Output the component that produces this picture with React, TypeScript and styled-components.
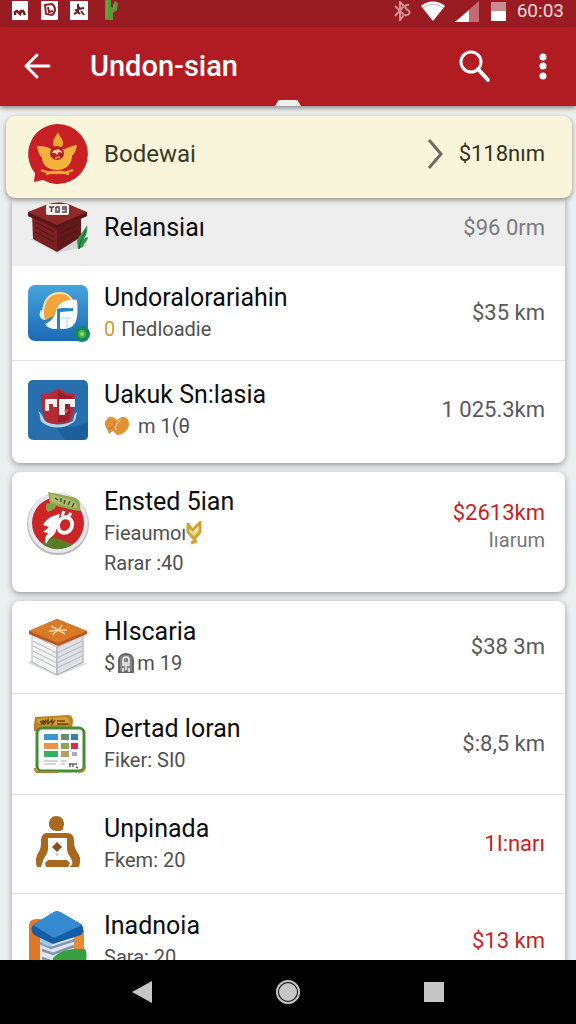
import React from "react";
import styled, { createGlobalStyle } from "styled-components";

const GlobalStyle = createGlobalStyle`
  *, *::before, *::after { box-sizing: border-box; }
  body { margin: 0; background: #000; font-family: Roboto, "Noto Sans", sans-serif; }
  h1, h2, p, ul { margin: 0; padding: 0; font-weight: 400; }
  ul { list-style: none; }
  svg { display: block; flex: none; }
`;

const Screen = styled.div`
  display: flex;
  flex-direction: column;
  height: 100vh;
  overflow: hidden;
  background: #eceff0;
`;

const StatusBar = styled.div`
  display: flex;
  flex: none;
  justify-content: space-between;
  align-items: flex-start;
  height: 27px;
  padding: 0 12px;
  background: #981c22;
`;

const StatusGroup = styled.div<{ $gap: number }>`
  display: flex;
  align-items: center;
  gap: ${(p) => p.$gap}px;
`;

const Clock = styled.time`
  color: #f6d9da;
  font-size: 19px;
  line-height: 22px;
`;

const AppBar = styled.header`
  position: relative;
  z-index: 2;
  display: flex;
  flex: none;
  align-items: center;
  height: 79px;
  padding: 0 12px 2px 16px;
  color: #fff;
  background: #b01c22;
  box-shadow: 0 2px 5px rgba(0, 0, 0, 0.45);
`;

const TabNotch = styled.span`
  position: absolute;
  bottom: 0;
  left: 50%;
  width: 26px;
  height: 6px;
  transform: translateX(-50%);
  background: #f3eeee;
  clip-path: polygon(14% 0, 86% 0, 100% 100%, 0 100%);
`;

const IconButton = styled.button`
  display: flex;
  align-items: center;
  justify-content: center;
  width: 42px;
  height: 48px;
  padding: 0;
  border: 0;
  color: inherit;
  background: none;
`;

const PageTitle = styled.h1`
  flex: 1;
  padding-left: 32px;
  font-size: 29px;
  line-height: 36px;
  font-weight: 500;
`;

const Actions = styled.div`
  display: flex;
  gap: 26px;
`;

const Content = styled.main`
  flex: 1;
  min-height: 0;
  overflow: hidden;
  padding-top: 10px;
`;

const Banner = styled.a`
  position: relative;
  z-index: 1;
  display: flex;
  align-items: center;
  gap: 17px;
  height: 82px;
  margin: 0 4px 0 6px;
  padding: 0 27px 6px 21px;
  border-radius: 9px;
  color: #3c3a22;
  text-decoration: none;
  background: #f8f5db;
  box-shadow: 0 2px 5px rgba(0, 0, 0, 0.4);
`;

const BannerAmount = styled.span`
  display: flex;
  align-items: center;
  gap: 15px;
  color: #34321c;
  font-size: 22px;
  line-height: 32px;
`;

const Card = styled.ul<{ $attached?: boolean; $end?: number }>`
  margin: 0 11px 9px 12px;
  padding-bottom: ${(p) => p.$end ?? 0}px;
  overflow: hidden;
  border-radius: ${(p) => (p.$attached ? "0 0 8px 8px" : "8px")};
  background: #fff;
  box-shadow: 0 2px 6px rgba(0, 0, 0, 0.36);
`;

const Avatar = styled.svg.attrs({ width: 60, height: 60, viewBox: "0 0 60 60", "aria-hidden": true })`
  overflow: visible;
`;

const Row = styled.li<{ $pad: number; $top?: boolean }>`
  display: flex;
  align-items: ${(p) => (p.$top ? "flex-start" : "center")};
  gap: 16px;
  padding: ${(p) => p.$pad}px 20px ${(p) => p.$pad}px 16px;

  & + & { border-top: 1px solid #e3e4e5; }

  > ${Avatar} { margin-top: ${(p) => (p.$top ? 6 : 0)}px; }
`;

const ShadedRow = styled(Row)`
  padding-top: 0;
  padding-bottom: 8px;
  background: #eeeeef;

  & + ${Row} { border-top: 0; }
`;

const Body = styled.div`
  flex: 1;
  min-width: 0;
`;

const Name = styled.h2`
  color: #0d0d0d;
  font-size: 25px;
  line-height: 32px;
  white-space: nowrap;
`;

const BannerName = styled(Name)`
  flex: 1;
  color: #3c3a22;
  font-size: 24px;
`;

const Detail = styled.p<{ $gap?: number }>`
  display: flex;
  align-items: center;
  gap: ${(p) => p.$gap ?? 0}px;
  color: #505050;
  font-size: 20px;
  line-height: 30px;
  white-space: nowrap;
`;

const Coin = styled.span`
  color: #cf9a35;
`;

const Side = styled.div<{ $top?: boolean }>`
  padding-top: ${(p) => (p.$top ? 13 : 0)}px;
  text-align: right;
  white-space: nowrap;
`;

const Amount = styled.p<{ $tone?: "red" | "muted" }>`
  color: ${(p) => (p.$tone === "red" ? "#c91f22" : p.$tone === "muted" ? "#7b7b7d" : "#59595b")};
  font-size: 22px;
  line-height: 28px;
`;

const Note = styled.p`
  color: #77777a;
  font-size: 20px;
  line-height: 26px;
`;

const NavBar = styled.nav`
  position: relative;
  z-index: 2;
  display: flex;
  flex: none;
  align-items: center;
  justify-content: center;
  gap: 104px;
  height: 64px;
  color: #c6c6c6;
  background: #000;
`;

const EmblemIcon = () => (
  <Avatar>
    <path d="M30 0a30 30 0 1 1-14 56L7 58l1-9A30 30 0 0 1 30 0z" fill="#c92025" />
    <path d="M31 8c-2 4-5 7-5 11 0 3 2 5 5 5s5-2 5-5c0-4-4-7-5-11z" fill="#eda832" />
    <path d="M10 22c7 0 11 1 14 3l14 0c3-2 7-3 12-4-1 5-2 8-5 11 0 7-5 14-15 14S15 40 15 34c-3-3-4-7-5-12z" fill="#f3b23c" />
    <path d="M14 46c8 4 24 4 32 0M19 50l7-2h9l7 2" fill="none" stroke="#efa832" strokeWidth="2.500" />
    <circle cx="30" cy="29" r="7" fill="#b51d20" />
    <path d="M25 29c2-5 5-2 6-4 2 1 5 2 4 4l-3-1-2 3-2-2z" fill="#f2c8a0" />
    <path d="M28 34l5-1" stroke="#f2b13a" strokeWidth="1.500" />
  </Avatar>
);

const CrateIcon = () => (
  <Avatar>
    <path d="M2 41l27 14 31-7-8-8z" fill="#d4d5d6" />
    <path d="M4 16l25 13v25L5 41z" fill="#7a2022" />
    <path d="M29 29l24-12v22L29 54z" fill="#62181b" />
    <path d="M0 14L20 6c7-2 14-2 20 0l19 8v4L29 31 0 18z" fill="#8e2829" />
    <path d="M0 14l29 13 30-13v4L29 31 0 18z" fill="#5c1618" />
    <path d="M7 24l19 10M7 29l19 10M7 34l19 10M33 35l17-9M33 41l17-9M33 47l17-9" stroke="#4d1416" strokeWidth="1" />
    <rect x="18" y="6" width="23" height="11" rx="2" fill="#f2eeee" />
    <path d="M21 9h5M23.500 9v5M28 9v5h3V9h-3M34 9h4v5h-4M34 11h3" fill="none" stroke="#4b474b" strokeWidth="1.500" />
    <path d="M59 27c-3 6-8 10-10 16l1 8 5-2c0-3 5-6 5-10-2 0-3 1-4 2 3-5 4-9 3-14z" fill="#2e9548" />
    <path d="M51 51c1-8 4-12 7-19" fill="none" stroke="#126029" strokeWidth="1" />
  </Avatar>
);

const SunAppIcon = () => (
  <Avatar>
    <defs>
      <linearGradient id="sky" x1="0" y1="0" x2="0" y2="1">
        <stop offset="0" stopColor="#45a5df" />
        <stop offset="1" stopColor="#1c69b3" />
      </linearGradient>
    </defs>
    <rect y="2" width="60" height="56" rx="7" fill="url(#sky)" />
    <path d="M13 27c-3 5-1 10 5 10l4-8z" fill="#e7f3fb" />
    <path d="M17 37c-4-16 4-27 15-27 6 0 10 3 12 7-10 1-16 6-18 16z" fill="#f2a43a" />
    <path d="M15 29c1-12 6-19 17-19 6 0 10 3 12 7" fill="none" stroke="#ffe0a5" strokeWidth="2" />
    <path d="M27 31c2-10 8-15 22-14 1 14 2 29-14 29-7 0-14 1-18-5 5-2 8-5 10-10z" fill="#fff" />
    <path d="M32 29v17h-3V26c6-2 10 0 16-1v3z" fill="#2685ca" />
    <path d="M33 35h10M39 36v9" stroke="#c9e1f3" strokeWidth="1.500" />
    <circle cx="54" cy="51" r="8" fill="#138565" />
    <circle cx="54" cy="51" r="4" fill="#45b63d" />
    <circle cx="54" cy="51" r="2" fill="#98d747" />
  </Avatar>
);

const ShieldAppIcon = () => (
  <Avatar>
    <rect width="60" height="60" rx="5" fill="#286fae" />
    <path d="M28 47l9 13h18c3 0 5-2 5-5V42L46 47z" fill="#1d5f9a" />
    <path d="M10 31c4 2 5 7 7 10 8 5 20 4 28 0 1-4 1-7 4-9-1 5-1 10-5 11-8 6-21 6-29 0-4-2-2-8-5-12z" fill="#b6d2e4" />
    <path d="M30 8c6 5 12 6 17 6-1 12-2 26-6 28-7 3-15 3-22 0-4-4-6-16-6-28 7 0 12-2 17-6z" fill="#b62a36" />
    <path d="M30 11c6 4 9 5 14 5l-3 23c-3 3-7 3-11 3z" fill="#981e2c" />
    <path d="M17 19h12v8h-4v-3h-4v7h-4zM31 19h16v8h-5v-3h-5v11h-6z" fill="#f8f2f1" />
    <path d="M36 30l5-1-3 5z" fill="#cf5c61" />
  </Avatar>
);

const BadgeIcon = () => (
  <Avatar>
    <circle cx="30" cy="32" r="31" fill="#b8b8be" />
    <circle cx="30" cy="31" r="30" fill="#e7e7ec" />
    <circle cx="30" cy="31" r="26" fill="#cc2427" />
    <path d="M14 51c6-6 13-7 24-1l7 2c-9 7-23 7-31-1z" fill="#557f27" />
    <path d="M20 0l24 5c7 1 9 5 8 14-10-1-19-4-30-7z" fill="#91a955" />
    <path d="M23 2l20 6c4 1 6 4 6 8-9-1-17-4-27-7z" fill="#b0bb70" />
    <path d="M27 6l3 2M33 6l0 4M37 8l-1 4M40 13l2-4M46 11l-2 4" stroke="#415426" strokeWidth="1.500" />
    <path d="M19 11c-2 4-1 7 1 9 6-2 8-4 8-7z" fill="#81a347" />
    <ellipse cx="37" cy="33" rx="7" ry="8" transform="rotate(25 37 33)" fill="none" stroke="#fff" strokeWidth="4" />
    <path d="M15 33c3-6 8-9 17-11l-3 10-1 6c0 4-4 6-7 9l-3 5-1-6 3-5c-3-1-4-1-5-1l6-5z" fill="#fff" />
    <path d="M34 24l2-5M40 25l3-4" stroke="#fff" strokeWidth="3" />
  </Avatar>
);

const PaperBoxIcon = () => (
  <Avatar>
    <path d="M0 46l29 13 29-12-9-7H8z" fill="#d9dadc" />
    <path d="M4 18l25 12v28L4 45z" fill="#f3f3f5" stroke="#b4b7ba" />
    <path d="M29 30l26-12v27L29 58z" fill="#dee0e4" stroke="#a3a5a9" />
    <path d="M5 24l24 12 25-12M5 29l24 12 25-12M5 34l24 12 25-12M5 39l24 12 25-12" fill="none" stroke="#b5b8bc" strokeWidth="1" />
    <path d="M1 14L29 2l30 12v3L30 29 1 17z" fill="#ba561b" />
    <path d="M1 14L29 2l30 12-29 12z" fill="#d97a29" />
    <path d="M23 9l14 8M21 14l18-1M25 18c1-4 7-4 9-10" fill="none" stroke="#f8d59f" strokeWidth="1.500" />
  </Avatar>
);

const PlannerIcon = () => (
  <Avatar>
    <path d="M7 3l33-2c4 0 5 3 5 7l-2 12H9L6 10z" fill="#bb8424" />
    <path d="M9 5l30-2 3 6-32 4z" fill="#d49f38" />
    <path d="M12 8l3-1-2 4 4-4-1 4 4-5v4l4-4v4l3-4M29 7h8M29 10h11" fill="none" stroke="#68481a" strokeWidth="1.500" />
    <rect x="9" y="14" width="47" height="43" rx="5" fill="#fff" stroke="#438b35" strokeWidth="3" />
    <path d="M7 17v-6c2-2 5-1 5 1M7 54c0 5 3 4 5 4h18M51 58c5 0 6-3 6-6" fill="none" stroke="#b47e25" strokeWidth="2" />
    <path d="M16 20h14v6H16z" fill="#3e95ce" /><path d="M33 20h8v6h-8z" fill="#688f6c" /><path d="M43 20h7v6h-7z" fill="#397cbe" />
    <path d="M16 29h14v6H16z" fill="#ed9149" /><path d="M33 29h8v6h-8z" fill="#91a548" /><path d="M43 29h7v6h-7z" fill="#cf3152" />
    <path d="M16 37h14v6H16z" fill="#38ad66" /><path d="M33 37h8v6h-8z" fill="#b4a15c" /><path d="M44 38h5v4h-5z" fill="#b0a6c3" />
    <path d="M16 47h14M16 50h12M33 47h6M33 50h4" stroke="#c4c7c8" strokeWidth="1.500" />
    <path d="M41 50h4v3M42 53v-3M46 50h3M48 53l2 1" fill="none" stroke="#586463" strokeWidth="1.500" />
  </Avatar>
);

const PersonIcon = () => (
  <Avatar>
    <path d="M28 2c5 0 8 3 8 8 0 2-1 3-1 5-1 2-3 2-6 2-5 0-8-3-8-7 0-5 3-8 7-8z" fill="#a8691f" />
    <path d="M19 19h20c5 0 7 3 7 8 0 6 2 9 5 14 2 4 1 8 0 12h-10c3-1 4-3 3-6-1-4-5-7-5-12V24H20v11c0 5-4 8-5 12l-2 6H9c-2-6-1-10 1-14 3-4 3-8 3-12 0-5 2-8 6-8z" fill="#a8691f" />
    <path d="M29 28l5 5-5 5-5-5z" fill="#84501b" />
    <path d="M29 39v3" stroke="#ddc39d" strokeWidth="1.500" />
    <path d="M20 46h19l3 3-2 4H18l-1-4z" fill="#a8691f" />
  </Avatar>
);

const BooksIcon = () => (
  <Avatar>
    <path d="M1 14c0-4 4-6 8-6l15 1v51H1z" fill="#df7929" />
    <path d="M39 19h17v41H39z" fill="#e78b31" />
    <path d="M12 25h34v33H12z" fill="#dfe5ee" />
    <path d="M12 32l11 5 24-8M14 39l11 4 21-8M14 47l11 4 21-8M15 55l11 3 20-8" fill="none" stroke="#8395b0" strokeWidth="2.500" />
    <path d="M10 23h14v11c-4 4-7-2-9 0z" fill="#9dcae8" />
    <path d="M5 14L26 1c2-1 4-1 6 0l21 12c3 3 3 8 0 11L25 33 6 24c-3-4-3-7-1-10z" fill="#155da9" />
    <path d="M5 14L26 1c2-1 4-1 6 0l22 13-28 13z" fill="#3489d1" />
    <path d="M25 47c10-10 20-9 32-9 3 4 1 14-1 22H23z" fill="#35a03d" />
  </Avatar>
);

const Hearts = () => (
  <svg width="26" height="20" viewBox="0 0 26 20" aria-hidden="true">
    <path d="M3 3c5-5 8 0 10 1 5-5 12-4 12 4 0 7-7 11-12 11L9 15l-4 3-2-5C0 9 0 6 3 3z" fill="#dd9236" />
    <path d="M12 14c-2-5 2-9 5-10" fill="none" stroke="#eeb15c" strokeWidth="2" />
    <path d="M10 5c2 3 0 7-6 8" fill="none" stroke="#b87428" strokeWidth="1" />
  </svg>
);

const Trophy = () => (
  <svg width="16" height="24" viewBox="0 0 16 24" aria-hidden="true">
    <path d="M2 2c0 3 3 5 5 7 2-2 4-5 7-7v9l-6 7-6-7V4M8 16v4M5 22l6-2" fill="none" stroke="#d3a22d" strokeWidth="3" />
    <path d="M5 10l3 4 4-5" fill="none" stroke="#f2ce63" strokeWidth="2" />
  </svg>
);

const Lock = () => (
  <svg width="16" height="22" viewBox="0 0 16 22" aria-hidden="true">
    <path d="M1 20V8c0-8 14-8 14 0v12z" fill="#858585" stroke="#666" strokeWidth="2" />
    <path d="M5 11V8c0-4 6-4 6 0v3zM4 13h8M5 16v4M8 14v4M11 16v4" fill="none" stroke="#f3f3f3" strokeWidth="1.500" />
  </svg>
);

export default function App() {
  return (
    <>
      <GlobalStyle />
      <Screen>
        <StatusBar>
          <StatusGroup $gap={12}>
            <svg width="17" height="20" viewBox="0 0 17 20" aria-hidden="true">
              <path d="M0 1h16v19H0z" fill="#fff" />
              <path d="M3 15v-3l2-1 3 3 1-3 2 0 2 4" fill="none" stroke="#781a20" strokeWidth="2.500" />
            </svg>
            <svg width="17" height="20" viewBox="0 0 17 20" aria-hidden="true">
              <rect y="1" width="17" height="19" rx="1" fill="#fff" />
              <path d="M4 5l7-1c4 3 4 8 0 11l-6-1zM7 7l1 5 4-1" fill="none" stroke="#8b2228" strokeWidth="2" />
            </svg>
            <svg width="18" height="20" viewBox="0 0 18 20" aria-hidden="true">
              <path d="M0 1h18v19H0z" fill="#fff" />
              <path d="M8 4v8l-4 2M10 7l-4 3 4 4M9 9l5-1M11 11l3 4" fill="none" stroke="#65252a" strokeWidth="2" />
            </svg>
            <svg width="24" height="20" viewBox="0 0 24 20" aria-hidden="true">
              <path d="M5 0h6v7l2 1V5l2-4 3 2-1 7-4 3v7H5z" fill="#5b963c" />
              <path d="M7 1v17M14 4v5" stroke="#7db04d" strokeWidth="1" />
            </svg>
          </StatusGroup>
          <StatusGroup $gap={10}>
            <svg width="17" height="20" viewBox="0 0 17 20" aria-hidden="true">
              <path d="M1 5l9 9-4 5V1l4 4-9 10M15 4c-5-1-4 4-1 5 3 2 1 6-3 5" fill="none" stroke="#d58f92" strokeWidth="2" />
            </svg>
            <svg width="24" height="20" viewBox="0 0 24 20" aria-hidden="true">
              <path d="M0 5C6-1 18-1 24 5L12 20z" fill="#fff" />
              <path d="M2 7c6-5 14-5 20 0" fill="none" stroke="#d9a3a5" strokeWidth="1" />
            </svg>
            <svg width="25" height="21" viewBox="0 0 25 21" aria-hidden="true">
              <path d="M0 21L24 0v21z" fill="#c36b70" />
              <path d="M0 21L14 9v12z" fill="#fff" />
            </svg>
            <svg width="17" height="20" viewBox="0 0 17 20" aria-hidden="true">
              <path d="M1 1h15v10H1z" fill="#c98c90" />
              <path d="M1 10h15v10H1z" fill="#fff" />
            </svg>
            <Clock>60:03</Clock>
          </StatusGroup>
        </StatusBar>

        <AppBar>
          <IconButton aria-label="Back">
            <svg width="28" height="28" viewBox="0 0 28 28" fill="none" stroke="currentColor" strokeWidth="3" strokeLinecap="round" strokeLinejoin="round">
              <path d="M26 14H3M14 3L3 14l11 11" />
            </svg>
          </IconButton>
          <PageTitle>Undon-sian</PageTitle>
          <Actions>
            <IconButton aria-label="Search">
              <svg width="32" height="32" viewBox="0 0 32 32" fill="none" stroke="currentColor">
                <circle cx="12" cy="12" r="10" strokeWidth="3" />
                <path d="M19 19l10 11" strokeWidth="4" strokeLinecap="round" />
              </svg>
            </IconButton>
            <IconButton aria-label="More options">
              <svg width="8" height="28" viewBox="0 0 8 28" fill="currentColor">
                <circle cx="4" cy="5" r="3.500" />
                <circle cx="4" cy="14" r="3.500" />
                <circle cx="4" cy="24" r="3.500" />
              </svg>
            </IconButton>
          </Actions>
          <TabNotch />
        </AppBar>

        <Content>
          <Banner href="#bodewai">
            <EmblemIcon />
            <BannerName>Bodewai</BannerName>
            <BannerAmount>
              <svg width="17" height="30" viewBox="0 0 17 30" fill="none" stroke="#6d6b60" strokeWidth="3" aria-hidden="true">
                <path d="M2 1l12 14L2 29" />
              </svg>
              $118nım
            </BannerAmount>
          </Banner>

          <Card $attached $end={4}>
            <ShadedRow $pad={0}>
              <CrateIcon />
              <Body><Name>Relansiaı</Name></Body>
              <Side><Amount $tone="muted">$96 0rm</Amount></Side>
            </ShadedRow>
            <Row $pad={16}>
              <SunAppIcon />
              <Body>
                <Name>Undoralorariahin</Name>
                <Detail $gap={6}><Coin>0</Coin>Πedloadie</Detail>
              </Body>
              <Side><Amount>$35 km</Amount></Side>
            </Row>
            <Row $pad={18}>
              <ShieldAppIcon />
              <Body>
                <Name>Uakuk Sn:lasia</Name>
                <Detail $gap={8}><Hearts />m 1(θ</Detail>
              </Body>
              <Side><Amount>1 025.3km</Amount></Side>
            </Row>
          </Card>

          <Card>
            <Row $pad={14} $top>
              <BadgeIcon />
              <Body>
                <Name>Ensted 5ian</Name>
                <Detail>Fieaumoı<Trophy /></Detail>
                <Detail>Rarar :40</Detail>
              </Body>
              <Side $top>
                <Amount $tone="red">$2613km</Amount>
                <Note>Iıarum</Note>
              </Side>
            </Row>
          </Card>

          <Card>
            <Row $pad={15}>
              <PaperBoxIcon />
              <Body>
                <Name>HIscaria</Name>
                <Detail $gap={3}>$<Lock />m 19</Detail>
              </Body>
              <Side><Amount>$38 3m</Amount></Side>
            </Row>
            <Row $pad={19}>
              <PlannerIcon />
              <Body>
                <Name>Dertad loran</Name>
                <Detail>Fiker: SI0</Detail>
              </Body>
              <Side><Amount>$:8,5 km</Amount></Side>
            </Row>
            <Row $pad={18}>
              <PersonIcon />
              <Body>
                <Name>Unpinada</Name>
                <Detail>Fkem: 20</Detail>
              </Body>
              <Side><Amount $tone="red">1I:narı</Amount></Side>
            </Row>
            <Row $pad={16}>
              <BooksIcon />
              <Body>
                <Name>Inadnoia</Name>
                <Detail>Sara: 20</Detail>
              </Body>
              <Side><Amount $tone="red">$13 km</Amount></Side>
            </Row>
          </Card>
        </Content>

        <NavBar aria-label="System">
          <IconButton aria-label="Back">
            <svg width="22" height="24" viewBox="0 0 22 24"><path d="M21 1v22L1 12z" fill="currentColor" /></svg>
          </IconButton>
          <IconButton aria-label="Home">
            <svg width="26" height="26" viewBox="0 0 26 26">
              <circle cx="13" cy="13" r="11" fill="none" stroke="currentColor" strokeWidth="2" />
              <circle cx="13" cy="13" r="9" fill="currentColor" />
            </svg>
          </IconButton>
          <IconButton aria-label="Recent apps">
            <svg width="22" height="22" viewBox="0 0 22 22"><path d="M1 1h20v20H1z" fill="currentColor" /></svg>
          </IconButton>
        </NavBar>
      </Screen>
    </>
  );
}
